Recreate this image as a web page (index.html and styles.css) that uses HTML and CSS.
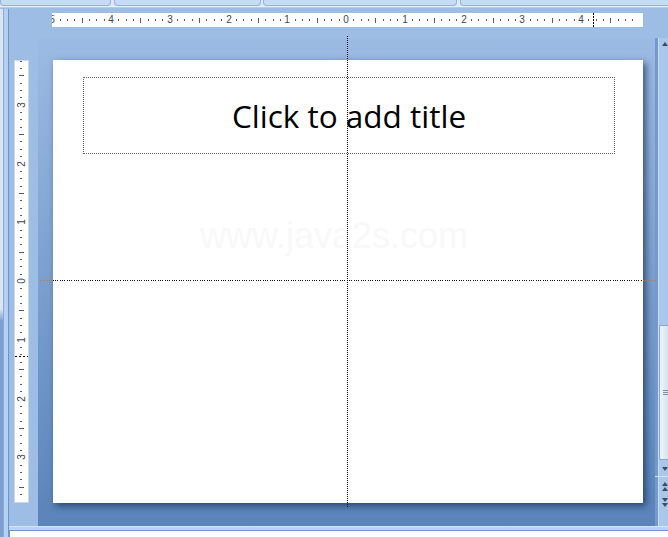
FILE: index.html
```html
<!DOCTYPE html>
<html lang="en">
<head>
    <meta charset="UTF-8">
    <meta name="viewport" content="width=device-width, initial-scale=1.0">
    <title>Presentation1 - Slide Editor</title>
    <link rel="stylesheet" href="styles.css">
</head>
<body>
    <div class="tabs">
        <div class="tab tab-1"></div>
        <div class="tab tab-2"></div>
        <div class="tab tab-3"></div>
        <div class="tab tab-4"></div>
    </div>
    <div class="tab-line"></div>

    <div class="main">
        <div class="edge"><div class="edge-pane"></div></div>

        <div class="editor">
            <div class="editor-row">
                <div class="workspace">
                    <div class="hruler" id="hruler"><span class="marker"></span></div>
                    <div class="vruler" id="vruler"><span class="marker"></span></div>

                    <div class="stage">
                        <div class="slide">
                            <div class="title-box">Click to add title</div>
                            <div class="watermark">www.java2s.com</div>
                        </div>
                    </div>

                    <!-- drawing guides -->
                    <div class="guide-v"></div>
                    <div class="guide-h">
                        <span class="outer"></span>
                        <span class="inner"></span>
                        <span class="outer end"></span>
                    </div>
                </div>

                <div class="vscroll">
                    <div class="scroll-body">
                        <div class="scroll-btn"><span class="arrow-up"></span></div>
                        <div class="scroll-track">
                            <div class="thumb"><span class="grip"></span></div>
                        </div>
                        <div class="scroll-btn down"><span class="arrow-down"></span></div>
                        <div class="page-btns">
                            <div class="dbl"><span class="arrow-up"></span><span class="arrow-up"></span></div>
                            <div class="dbl"><span class="arrow-down"></span><span class="arrow-down"></span></div>
                        </div>
                    </div>
                </div>
            </div>
            <div class="notes-bar"></div>
            <div class="notes"></div>
        </div>
    </div>

    <script src="app.js"></script>
</body>
</html>
```

FILE: styles.css
```css
* { box-sizing: border-box; }

body {
    margin: 0;
    width: 668px;
    height: 537px;
    overflow: hidden;
    font-family: "Liberation Sans", Arial, sans-serif;
    background: #9ebde5;
}

/* ribbon tab bottoms */
.tabs {
    display: flex;
    height: 6px;
    background: #dfe9f6;
}
.tab {
    height: 6px;
    background: #c7dbf3;
    border: 1px solid #8fb2df;
    border-top: none;
    border-radius: 0 0 4px 4px;
}
.tab-1 { width: 111px; }
.tab-2 { width: 147px; margin-left: 3px; }
.tab-3 { width: 194px; margin-left: 2px; }
.tab-4 { flex: 1; margin-left: 3px; border-right: none; border-radius: 0 0 0 4px; }
.tab-line {
    height: 3px;
    background: linear-gradient(#e6eef9 0 1px, #b4cbeb 1px 2px, #9ebde5 2px);
}

.main {
    display: flex;
    height: 528px;
}
.edge {
    width: 9px;
    display: flex;
    background: linear-gradient(to right, transparent 0 4px, #b4d0f5 4px 8px, #6d92c6 8px 9px);
}
.edge-pane {
    width: 4px;
    background: linear-gradient(#dbe5f2 0 300px, #7c9fcf 312px);
    border-right: 1px solid #8ba9d3;
}

.editor {
    width: 659px;
    display: flex;
    flex-direction: column;
}
.editor-row {
    display: flex;
    height: 517px;
}

.workspace {
    position: relative;
    width: 646px;
    display: grid;
    grid-template-columns: 5px 15px 9px 15px 590px 12px;
    grid-template-rows: 4px 14px 11px 22px 443px 23px;
    background: #9ebde5;
}

/* rulers */
.hruler {
    grid-column: 5;
    grid-row: 2;
    margin-left: -1px;
    position: relative;
    overflow: hidden;
    background: #fff;
}
.vruler {
    grid-column: 2;
    grid-row: 5;
    position: relative;
    overflow: hidden;
    background: #fff;
    border: 1px solid #cfd8e5;
}
.tick {
    position: absolute;
    background: #545a6b;
}
.hruler .tick { top: 6px; width: 1px; height: 2px; }
.hruler .tick.long { top: 5px; height: 5px; }
.vruler .tick { left: 5px; width: 2px; height: 1px; }
.vruler .tick.long { left: 4px; width: 5px; }
.num {
    position: absolute;
    font-size: 10px;
    color: #3d4558;
    text-align: center;
}
.hruler .num {
    top: 0;
    width: 10px;
    margin-left: -5px;
    line-height: 14px;
}
.vruler .num {
    left: 0;
    width: 13px;
    height: 12px;
    margin-top: -6px;
    line-height: 12px;
    transform: rotate(-90deg);
}
.marker { position: absolute; z-index: 1; }
.hruler .marker {
    left: 541px;
    top: 0;
    width: 1px;
    height: 14px;
    background: repeating-linear-gradient(#000 0 2px, transparent 2px 3px);
}
.vruler .marker {
    top: 295px;
    left: 0;
    width: 13px;
    height: 1px;
    background: repeating-linear-gradient(to right, #000 0 2px, transparent 2px 4px);
}

/* slide area */
.stage {
    grid-column: 4 / 7;
    grid-row: 4 / 7;
    padding: 22px 12px 23px 15px;
    background: linear-gradient(#9cbbe3, #5a84ba);
}
.slide {
    position: relative;
    width: 590px;
    height: 443px;
    padding: 17px 0 0 30px;
    background: #fff;
    box-shadow: 3px 3px 7px rgba(22, 42, 78, 0.7);
}
.title-box {
    width: 532px;
    height: 77px;
    border: 1px dotted #666;
    display: flex;
    align-items: center;
    justify-content: center;
    font-family: "Open Sans", sans-serif;
    font-size: 31.5px;
    color: #000;
}
.watermark {
    position: absolute;
    left: 147px;
    top: 156px;
    font-size: 36px;
    line-height: 40px;
    color: #f8f8f8;
}

.guide-v {
    position: absolute;
    left: 338px;
    top: 27px;
    width: 1px;
    height: 472px;
    background: repeating-linear-gradient(#111 0 1px, transparent 1px 2px);
}
.guide-h {
    position: absolute;
    left: 31px;
    top: 271px;
    width: 615px;
    height: 1px;
    display: flex;
}
.guide-h span {
    height: 1px;
    background: repeating-linear-gradient(to right, currentColor 0 1px, transparent 1px 2px, currentColor 2px 3px, transparent 3px 4px, currentColor 4px 5px, transparent 5px 7px);
}
.guide-h .outer { width: 13px; color: #c47a2a; }
.guide-h .outer.end { width: 12px; }
.guide-h .inner { width: 590px; color: #111; }

/* vertical scrollbar */
.vscroll {
    width: 13px;
    padding-top: 29px;
    display: flex;
    flex-direction: column;
}
.scroll-body {
    flex: 1;
    display: flex;
    flex-direction: column;
    background: linear-gradient(to right, #7499cf 0 3px, #c9dcf4 3px 4px, #a9c6eb 4px);
}
.scroll-btn {
    height: 12px;
    display: flex;
    align-items: center;
    padding-left: 7px;
}
.scroll-btn.down { height: 14px; }
.arrow-up, .arrow-down {
    display: block;
    width: 0;
    height: 0;
    border-left: 3px solid transparent;
    border-right: 3px solid transparent;
}
.arrow-up { border-bottom: 4px solid #3c4b60; }
.arrow-down { border-top: 4px solid #3c4b60; }
.scroll-track {
    flex: 1;
    padding-left: 4px;
}
.thumb {
    margin-top: 275px;
    height: 135px;
    border: 1px solid #8aa6cc;
    border-right: none;
    border-radius: 2px 0 0 2px;
    background: linear-gradient(to right, #eef3fa, #d6e3f3);
    display: flex;
    align-items: center;
    padding-left: 3px;
}
.grip {
    width: 5px;
    height: 5px;
    background: repeating-linear-gradient(#7d8ea6 0 1px, transparent 1px 2px);
}
.page-btns {
    height: 50px;
    border-top: 1px solid #d3e2f6;
    display: flex;
    flex-direction: column;
    gap: 7px;
    padding: 5px 0 0 7px;
}
.dbl {
    display: flex;
    flex-direction: column;
    gap: 1px;
}

/* notes pane */
.notes-bar {
    height: 4px;
    background: linear-gradient(#d2e4fb 0 1px, #b7d3f7 1px);
}
.notes {
    flex: 1;
    background: #fff;
    border-top: 1px solid #6f95ca;
    border-left: 1px solid #6f95ca;
}
```

FILE: app.js
```js
var INCH = 58.75;

// ticks every 1/8 inch, longer tick at the half inch, number at each inch
function buildRuler(ruler, zero, length, vertical) {
    var step = INCH / 8;
    var first = Math.ceil((-zero - 1) / step);
    var last = Math.floor((length - zero - 4) / step);
    for (var i = first; i <= last; i++) {
        var mark = document.createElement('span');
        if (i % 8 === 0) {
            mark.className = 'num';
            mark.textContent = Math.abs(i / 8);
        } else {
            mark.className = i % 4 === 0 ? 'tick long' : 'tick';
        }
        mark.style[vertical ? 'top' : 'left'] = Math.round(zero + i * step) + 'px';
        ruler.appendChild(mark);
    }
}

buildRuler(document.getElementById('hruler'), 294, 591, false);
buildRuler(document.getElementById('vruler'), 220, 441, true);
```
